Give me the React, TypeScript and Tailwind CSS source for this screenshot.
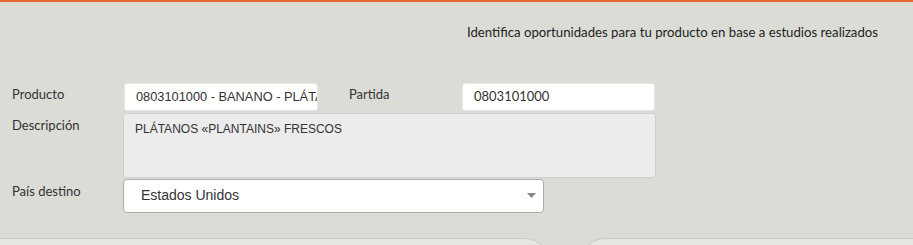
const labelFont = { fontFamily: "Lato, 'Open Sans', sans-serif" };

function Label({ children }: { children: React.ReactNode }) {
  return (
    <div className="w-[124px] shrink-0 pl-[12px] text-[13px] text-[#333]" style={labelFont}>
      {children}
    </div>
  );
}

function App() {
  return (
    <div className="h-[245px] w-full overflow-hidden bg-[#dcdcd7]">
      <div className="h-[2px] bg-[#e8692f]" />
      <div className="flex justify-end pr-[35px] pt-[21px] text-[13.2px] text-[#222]" style={labelFont}>
        Identifica oportunidades para tu producto en base a estudios realizados
      </div>

      <div className="mt-[40px] flex flex-col">
        <div className="flex items-start">
          <div className="pt-[2px]">
            <Label>Producto</Label>
          </div>
          <input
            readOnly
            value="0803101000 - BANANO - PLÁTANOS"
            className="h-[28px] w-[194px] rounded-[3px] border border-[#e6e6e6] bg-white pl-[11px] font-['Liberation_Sans',Arial,sans-serif] text-[12.8px] text-[#333] outline-none"
          />
          <div className="w-[144px] shrink-0 pl-[31px] pt-[2px] text-[13px] text-[#333]" style={labelFont}>
            Partida
          </div>
          <div className="flex h-[28px] w-[193px] items-center rounded-[3px] border border-[#e6e6e6] bg-white pl-[11px] text-[13px] text-[#333]" style={labelFont}>
            0803101000
          </div>
        </div>

        <div className="mt-[2px] flex items-start">
          <div className="pt-[3px]">
            <Label>Descripción</Label>
          </div>
          <div className="-ml-px h-[65px] w-[533px] rounded-[3px] border border-[#cfcfcc] bg-[#ececec] pl-[11px] pt-[6px] font-['Liberation_Sans',Arial,sans-serif] text-[12px] text-[#333]">
            PLÁTANOS «PLANTAINS» FRESCOS
          </div>
        </div>

        <div className="mt-[1px] flex items-start">
          <div className="pt-[3px]">
            <Label>País destino</Label>
          </div>
          <div className="-ml-px flex h-[34px] w-[421px] items-center justify-between rounded-[4px] border border-[#aaa] bg-white pl-[17px] pr-[7px] font-['Liberation_Sans',Arial,sans-serif] text-[14px] text-[#333]">
            <span>Estados Unidos</span>
            <svg width="9" height="5" viewBox="0 0 9 5">
              <path d="M0 0 L9 0 L4.5 5 Z" fill="#888" />
            </svg>
          </div>
        </div>
      </div>

      <div className="mt-[25px] flex gap-[32px]">
        <div className="h-[40px] w-[549px] rounded-tr-[24px] border-t border-r border-[#cacac6] bg-[#e6e6e3]" />
        <div className="h-[40px] flex-1 rounded-tl-[24px] border-t border-l border-[#cacac6] bg-[#e6e6e3]" />
      </div>
    </div>
  );
}

export default App;
